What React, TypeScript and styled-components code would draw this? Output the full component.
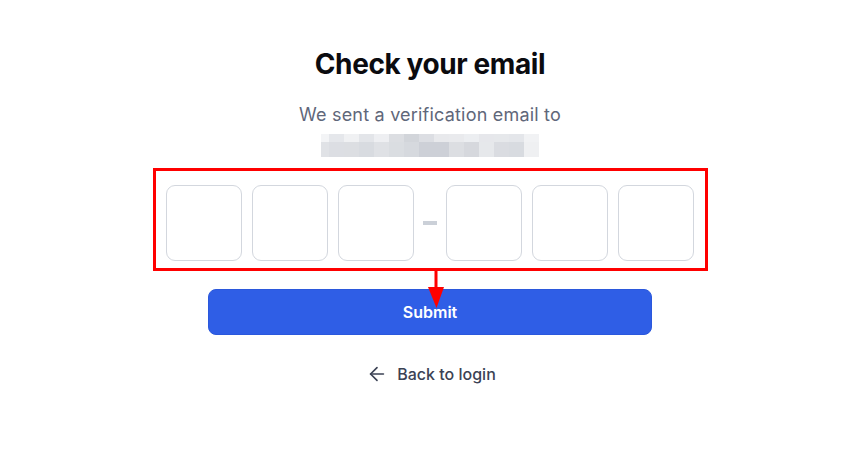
import React from "react";
import styled, { createGlobalStyle } from "styled-components";
import { ArrowLeft } from "lucide-react";

const GlobalStyle = createGlobalStyle`
  html, body {
    margin: 0;
    padding: 0;
    background: #ffffff;
    font-family: Inter, "Noto Sans", "Liberation Sans", sans-serif;
  }
  * { box-sizing: border-box; }
`;

const Page = styled.main`
  width: 857px;
  min-height: 459px;
  display: flex;
  flex-direction: column;
  align-items: center;
  padding-top: 46px;
  padding-left: 3px;
`;

const Title = styled.h1`
  margin: 0;
  font-size: 28px;
  line-height: 36px;
  font-weight: 700;
  color: #0b0b0f;
  letter-spacing: -0.4px;
`;

const Subtitle = styled.p`
  margin: 21px 0 0;
  font-size: 18px;
  line-height: 24px;
  font-weight: 400;
  color: #5f677a;
  letter-spacing: 0.2px;
`;

const MaskedEmail = styled.div`
  margin-top: 7px;
  display: flex;
  flex-direction: column;
`;

const MaskRow = styled.div<{ $h: number }>`
  display: flex;
  height: ${(p) => p.$h}px;
`;

const MaskCell = styled.span<{ $w: number; $c: string }>`
  display: block;
  width: ${(p) => p.$w}px;
  height: 100%;
  background: ${(p) => p.$c};
`;

const OtpArea = styled.div`
  position: relative;
  margin-top: 28px;
`;

const OtpRow = styled.div`
  display: flex;
  align-items: center;
  gap: 10px;
`;

const OtpBox = styled.input`
  width: 76px;
  height: 76px;
  border: 1px solid #d3d7de;
  border-radius: 9px;
  background: #ffffff;
  outline: none;
  font-family: inherit;
  font-size: 28px;
  text-align: center;
  color: #111827;
`;

const Dash = styled.span`
  display: block;
  width: 14px;
  height: 4px;
  margin: 0 -1px;
  background: #cbd0d8;
`;

const Highlight = styled.div`
  position: absolute;
  left: -13px;
  top: -17px;
  right: -14px;
  bottom: -10px;
  border: 3px solid #ff0000;
  pointer-events: none;
`;

const Pointer = styled.svg`
  position: absolute;
  left: 260px;
  top: 86px;
  pointer-events: none;
`;

const SubmitButton = styled.button`
  margin-top: 28px;
  width: 444px;
  height: 46px;
  border: 1px solid #2b58dc;
  border-radius: 8px;
  background: #2f5ee6;
  color: #ffffff;
  font-family: inherit;
  font-size: 16px;
  font-weight: 600;
  cursor: pointer;
`;

const BackLink = styled.a`
  margin-top: 27px;
  display: flex;
  align-items: center;
  gap: 9px;
  font-size: 16px;
  line-height: 24px;
  font-weight: 500;
  color: #3b4254;
  text-decoration: none;
  margin-left: 2px;
`;

const topRow = [
  "#f3f4f6", "#e5e7eb", "#f0f1f3", "#e3e5e9", "#eeeff2", "#dcdee2", "#d2d5da", "#dcdee3",
  "#e8e9ec", "#e9eaed", "#eceef1", "#e6e7eb", "#e6e8eb", "#e4e6ea", "#f1f2f4",
];
const bottomRow = [
  "#e0e2e6", "#dcdee3", "#dcdee2", "#d8dbe0", "#dfe1e5", "#dadde1", "#d6d9de", "#cdd0d7",
  "#cdd0d7", "#dcdee2", "#d6d8dd", "#e6e8eb", "#dadce1", "#d8dbe0", "#eff0f2",
];
const widths = topRow.map((_, i) => (i === 0 ? 8 : 15));

export default function App() {
  return (
    <>
      <GlobalStyle />
      <Page>
        <Title>Check your email</Title>
        <Subtitle>We sent a verification email to</Subtitle>
        <MaskedEmail aria-label="hidden email address">
          <MaskRow $h={8}>
            {topRow.map((c, i) => (
              <MaskCell key={i} $w={widths[i]} $c={c} />
            ))}
          </MaskRow>
          <MaskRow $h={15}>
            {bottomRow.map((c, i) => (
              <MaskCell key={i} $w={widths[i]} $c={c} />
            ))}
          </MaskRow>
        </MaskedEmail>
        <OtpArea>
          <OtpRow>
            <OtpBox maxLength={1} aria-label="digit 1" />
            <OtpBox maxLength={1} aria-label="digit 2" />
            <OtpBox maxLength={1} aria-label="digit 3" />
            <Dash />
            <OtpBox maxLength={1} aria-label="digit 4" />
            <OtpBox maxLength={1} aria-label="digit 5" />
            <OtpBox maxLength={1} aria-label="digit 6" />
          </OtpRow>
          <Highlight />
          <Pointer width="20" height="40" viewBox="0 0 20 40">
            <rect x="8.5" y="0" width="3" height="18" fill="#ff0000" />
            <polygon points="2,16 18,16 10.5,37" fill="#ff0000" />
          </Pointer>
        </OtpArea>
        <SubmitButton type="button">Submit</SubmitButton>
        <BackLink href="#">
          <ArrowLeft size={22} strokeWidth={1.8} />
          Back to login
        </BackLink>
      </Page>
    </>
  );
}
